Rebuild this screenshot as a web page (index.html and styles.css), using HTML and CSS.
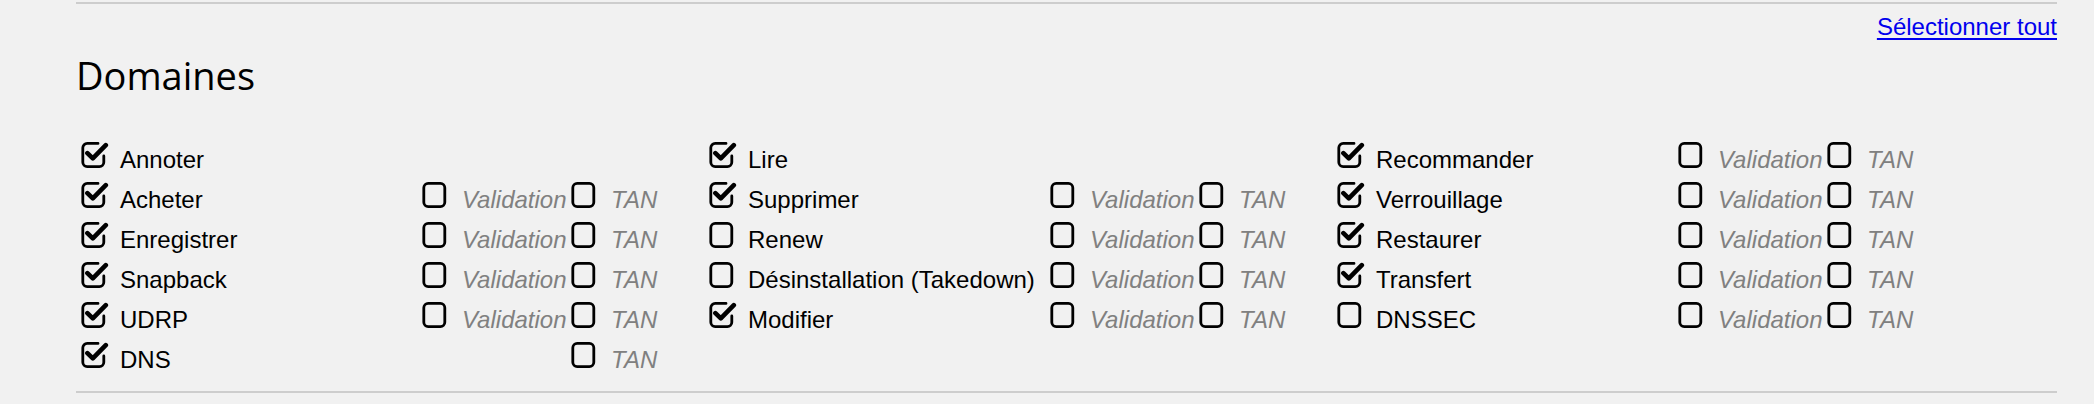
FILE: index.html
```html
<!DOCTYPE html>
<html lang="fr">
<head>
    <meta charset="UTF-8">
    <meta name="viewport" content="width=device-width, initial-scale=1.0">
    <title>Droits - Domaines</title>
    <link rel="stylesheet" href="styles.css">
</head>
<body>
    <!-- icônes des cases à cocher -->
    <svg class="icon-defs" xmlns="http://www.w3.org/2000/svg">
        <symbol id="ic-checked" viewBox="0 0 28 28">
            <path d="M17 2.4H6.2A4.4 4.4 0 0 0 1.8 6.8V21.2A4.4 4.4 0 0 0 6.2 25.6H18.4A4.4 4.4 0 0 0 22.8 21.2V15" fill="none" stroke="#000" stroke-width="2.8" stroke-linecap="round"/>
            <path d="M6.4 12.2L11.8 17.4L24.8 4.2" fill="none" stroke="#000" stroke-width="4.6" stroke-linecap="round" stroke-linejoin="round"/>
        </symbol>
        <symbol id="ic-empty" viewBox="0 0 28 28">
            <rect x="1.8" y="2.4" width="21" height="23.2" rx="4.4" fill="none" stroke="#000" stroke-width="2.8"/>
        </symbol>
    </svg>

    <div class="container">
        <hr class="sep">

        <div class="select-all">
            <a href="#">Sélectionner tout</a>
        </div>

        <h2 class="section-title">Domaines</h2>

        <div class="rights">
            <!-- colonne 1 -->
            <div class="rights-col">
                <div class="right-row">
                    <label class="opt"><svg class="ic"><use href="#ic-checked"/></svg><span>Annoter</span></label>
                </div>
                <div class="right-row">
                    <label class="opt"><svg class="ic"><use href="#ic-checked"/></svg><span>Acheter</span></label>
                    <label class="opt sub"><svg class="ic"><use href="#ic-empty"/></svg><span>Validation</span></label>
                    <label class="opt sub"><svg class="ic"><use href="#ic-empty"/></svg><span>TAN</span></label>
                </div>
                <div class="right-row">
                    <label class="opt"><svg class="ic"><use href="#ic-checked"/></svg><span>Enregistrer</span></label>
                    <label class="opt sub"><svg class="ic"><use href="#ic-empty"/></svg><span>Validation</span></label>
                    <label class="opt sub"><svg class="ic"><use href="#ic-empty"/></svg><span>TAN</span></label>
                </div>
                <div class="right-row">
                    <label class="opt"><svg class="ic"><use href="#ic-checked"/></svg><span>Snapback</span></label>
                    <label class="opt sub"><svg class="ic"><use href="#ic-empty"/></svg><span>Validation</span></label>
                    <label class="opt sub"><svg class="ic"><use href="#ic-empty"/></svg><span>TAN</span></label>
                </div>
                <div class="right-row">
                    <label class="opt"><svg class="ic"><use href="#ic-checked"/></svg><span>UDRP</span></label>
                    <label class="opt sub"><svg class="ic"><use href="#ic-empty"/></svg><span>Validation</span></label>
                    <label class="opt sub"><svg class="ic"><use href="#ic-empty"/></svg><span>TAN</span></label>
                </div>
                <div class="right-row">
                    <label class="opt"><svg class="ic"><use href="#ic-checked"/></svg><span>DNS</span></label>
                    <span></span>
                    <label class="opt sub"><svg class="ic"><use href="#ic-empty"/></svg><span>TAN</span></label>
                </div>
            </div>

            <!-- colonne 2 -->
            <div class="rights-col">
                <div class="right-row">
                    <label class="opt"><svg class="ic"><use href="#ic-checked"/></svg><span>Lire</span></label>
                </div>
                <div class="right-row">
                    <label class="opt"><svg class="ic"><use href="#ic-checked"/></svg><span>Supprimer</span></label>
                    <label class="opt sub"><svg class="ic"><use href="#ic-empty"/></svg><span>Validation</span></label>
                    <label class="opt sub"><svg class="ic"><use href="#ic-empty"/></svg><span>TAN</span></label>
                </div>
                <div class="right-row">
                    <label class="opt"><svg class="ic"><use href="#ic-empty"/></svg><span>Renew</span></label>
                    <label class="opt sub"><svg class="ic"><use href="#ic-empty"/></svg><span>Validation</span></label>
                    <label class="opt sub"><svg class="ic"><use href="#ic-empty"/></svg><span>TAN</span></label>
                </div>
                <div class="right-row">
                    <label class="opt"><svg class="ic"><use href="#ic-empty"/></svg><span>Désinstallation (Takedown)</span></label>
                    <label class="opt sub"><svg class="ic"><use href="#ic-empty"/></svg><span>Validation</span></label>
                    <label class="opt sub"><svg class="ic"><use href="#ic-empty"/></svg><span>TAN</span></label>
                </div>
                <div class="right-row">
                    <label class="opt"><svg class="ic"><use href="#ic-checked"/></svg><span>Modifier</span></label>
                    <label class="opt sub"><svg class="ic"><use href="#ic-empty"/></svg><span>Validation</span></label>
                    <label class="opt sub"><svg class="ic"><use href="#ic-empty"/></svg><span>TAN</span></label>
                </div>
            </div>

            <!-- colonne 3 -->
            <div class="rights-col">
                <div class="right-row">
                    <label class="opt"><svg class="ic"><use href="#ic-checked"/></svg><span>Recommander</span></label>
                    <label class="opt sub"><svg class="ic"><use href="#ic-empty"/></svg><span>Validation</span></label>
                    <label class="opt sub"><svg class="ic"><use href="#ic-empty"/></svg><span>TAN</span></label>
                </div>
                <div class="right-row">
                    <label class="opt"><svg class="ic"><use href="#ic-checked"/></svg><span>Verrouillage</span></label>
                    <label class="opt sub"><svg class="ic"><use href="#ic-empty"/></svg><span>Validation</span></label>
                    <label class="opt sub"><svg class="ic"><use href="#ic-empty"/></svg><span>TAN</span></label>
                </div>
                <div class="right-row">
                    <label class="opt"><svg class="ic"><use href="#ic-checked"/></svg><span>Restaurer</span></label>
                    <label class="opt sub"><svg class="ic"><use href="#ic-empty"/></svg><span>Validation</span></label>
                    <label class="opt sub"><svg class="ic"><use href="#ic-empty"/></svg><span>TAN</span></label>
                </div>
                <div class="right-row">
                    <label class="opt"><svg class="ic"><use href="#ic-checked"/></svg><span>Transfert</span></label>
                    <label class="opt sub"><svg class="ic"><use href="#ic-empty"/></svg><span>Validation</span></label>
                    <label class="opt sub"><svg class="ic"><use href="#ic-empty"/></svg><span>TAN</span></label>
                </div>
                <div class="right-row">
                    <label class="opt"><svg class="ic"><use href="#ic-empty"/></svg><span>DNSSEC</span></label>
                    <label class="opt sub"><svg class="ic"><use href="#ic-empty"/></svg><span>Validation</span></label>
                    <label class="opt sub"><svg class="ic"><use href="#ic-empty"/></svg><span>TAN</span></label>
                </div>
            </div>
        </div>

        <hr class="sep sep-bottom">
    </div>
</body>
</html>
```

FILE: styles.css
```css
/* base */
* {
    margin: 0;
    padding: 0;
    box-sizing: border-box;
}

body {
    font-family: "Liberation Sans", Arial, sans-serif;
    font-size: 24px;
    background-color: #f1f1f1;
    color: #000;
}

.icon-defs {
    position: absolute;
    width: 0;
    height: 0;
    overflow: hidden;
}

/* conteneur */
.container {
    width: 1981px;
    margin-left: 76px;
    padding-top: 2px;
}

.sep {
    border: none;
    height: 2px;
    background-color: #cdcdcd;
}

.sep-bottom {
    margin-top: 11px;
}

/* lien sélectionner tout */
.select-all {
    margin-top: 5px;
    text-align: right;
    line-height: 36px;
}

.select-all a {
    color: #0000ee;
    text-decoration: underline;
    text-underline-offset: 3px;
}

/* titre de section */
.section-title {
    margin-top: 4px;
    font-family: "Open Sans", "Liberation Sans", sans-serif;
    font-size: 38px;
    font-weight: 400;
    line-height: 52px;
    color: #000;
}

/* droits */
.rights {
    display: grid;
    grid-template-columns: repeat(3, 628px);
    margin-top: 39px;
    padding-left: 5px;
}

.right-row {
    display: grid;
    grid-template-columns: 341px 149px auto;
    height: 40px;
}

.opt {
    display: flex;
    align-items: flex-start;
    gap: 11px;
    line-height: 40px;
    white-space: nowrap;
    cursor: pointer;
}

.opt .ic {
    flex: none;
    width: 28px;
    height: 28px;
    margin-top: 1px;
}

.opt.sub {
    gap: 12px;
    color: #808080;
    font-style: italic;
}
```
